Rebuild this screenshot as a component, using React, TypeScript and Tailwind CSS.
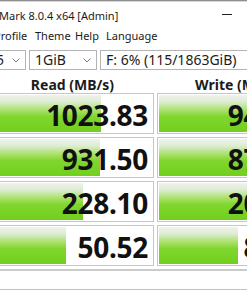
import React from 'react'

// rows of the benchmark table: read / write in MB/s, bar = filled width of each cell
const rows = [
  { read: '1023.83', readBar: 'w-[108px]', write: '949.37', writeBar: 'w-[150px]' },
  { read: '931.50', readBar: 'w-[107px]', write: '873.25', writeBar: 'w-[142px]' },
  { read: '228.10', readBar: 'w-[90px]', write: '205.47', writeBar: 'w-[110px]' },
  { read: '50.52', readBar: 'w-[73px]', write: '85.96', writeBar: 'w-[79px]' },
]

function Chevron() {
  return (
    <svg width="8" height="5" viewBox="0 0 8 5" className="shrink-0">
      <polyline points="0.5,0.5 4,4 7.5,0.5" fill="none" stroke="#7d7d7d" strokeWidth="1" />
    </svg>
  )
}

function Combo({ label, className }: { label: string; className: string }) {
  return (
    <div
      className={`h-[20px] shrink-0 flex items-center justify-between border border-[#b4b4b4] bg-white pl-[5px] pr-[5px] ${className}`}
    >
      <span className="text-[14px] leading-none whitespace-nowrap">{label}</span>
      <Chevron />
    </div>
  )
}

function Cell({ value, bar }: { value: string; bar: string }) {
  return (
    <div className="h-[41px] border border-[#c6c6c6] bg-white p-[1px]">
      <div className="relative h-full flex items-center justify-end pr-[4px] pt-[3px]">
        <div
          className={`absolute left-0 top-0 bottom-0 ${bar} bg-[linear-gradient(to_bottom,#f0f2ee_0%,#deedd2_18%,#a8e068_42%,#80d62e_58%,#72cf1e_100%)]`}
        />
        <span className="relative text-[28px] font-bold leading-none tracking-[-0.3px] text-[#111]">
          {value}
        </span>
      </div>
    </div>
  )
}

export default function App() {
  return (
    <div className="w-[247px] h-[296px] overflow-hidden bg-white text-[#1b1b1b] font-['Noto_Sans',sans-serif]">
      <div className="h-[1px] bg-[#8e8e8e]" />
      <div className="h-[1px] bg-[#d9d9d9]" />

      {/* title bar */}
      <div className="h-[24px] flex items-center">
        <span className="ml-[-1px] pt-[2px] text-[11px] leading-none whitespace-nowrap">Mark 8.0.4 x64 [Admin]</span>
        <div className="ml-auto mr-[15px] w-[10px] h-[1px] bg-[#222]" />
      </div>

      {/* menu */}
      <div className="h-[18px] flex items-center text-[11px] leading-none whitespace-nowrap">
        <span className="ml-[-6px] w-[41px] shrink-0">Profile</span>
        <span className="w-[40px] shrink-0">Theme</span>
        <span className="w-[31px] shrink-0">Help</span>
        <span>Language</span>
      </div>

      {/* toolbar */}
      <div className="mt-[6px] flex gap-[3px] ml-[-10px]">
        <Combo label="5" className="w-[36px]" />
        <Combo label="1GiB" className="w-[68px]" />
        <Combo label="F: 6% (115/1863GiB)" className="w-[200px]" />
      </div>

      {/* table */}
      <div className="ml-[-9px] grid grid-cols-[163px_163px] gap-x-[3px]">
        <div className="h-[23px] flex items-center justify-center pt-[6px] text-[14px] font-bold leading-none whitespace-nowrap">
          Read (MB/s)
        </div>
        <div className="h-[23px] flex items-center justify-center pt-[6px] text-[14px] font-bold leading-none whitespace-nowrap">
          Write (MB/s)
        </div>
      </div>
      <div className="ml-[-9px] grid grid-cols-[163px_163px] gap-x-[3px] gap-y-[3px]">
        {rows.map((r) => (
          <React.Fragment key={r.read}>
            <Cell value={r.read} bar={r.readBar} />
            <Cell value={r.write} bar={r.writeBar} />
          </React.Fragment>
        ))}
      </div>

      {/* comment box */}
      <div className="mt-[3px] h-[2px] bg-[#cbcbcb]" />
      <div className="h-[18px] bg-white" />
      <div className="h-[1px] bg-[#c2c2c2]" />
    </div>
  )
}
